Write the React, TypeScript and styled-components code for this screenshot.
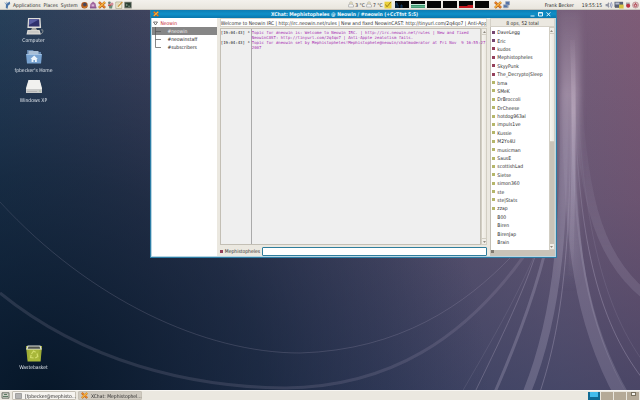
import React, { useState } from "react";
import styled, { createGlobalStyle } from "styled-components";

const GlobalStyle = createGlobalStyle`
  * { box-sizing: border-box; }
  html, body { margin: 0; padding: 0; }
  body { font-family: "DejaVu Sans Condensed", "Liberation Sans", sans-serif; font-size: 5px; line-height: 8px; color: #2b2b2b; }
  button, input { font: inherit; color: inherit; margin: 0; padding: 0; border: 0; background: none; }
  ul { list-style: none; margin: 0; padding: 0; }
  svg { display: block; flex: none; }
`;

const Screen = styled.div`
  position: relative;
  display: flex;
  flex-direction: column;
  height: 100vh;
  overflow: hidden;
  background: #17293f;
`;
const Wallpaper = styled.svg`
  position: absolute;
  inset: 0;
  width: 100%;
  height: 100%;
`;
const Panel = styled.header`
  position: relative;
  display: flex;
  align-items: center;
  height: 10px;
  padding: 0 1px 0 4px;
  background: linear-gradient(#f3f1ec, #e9e6de);
  border-bottom: 1px solid #c9c5bd;
`;
const MenuBar = styled.nav`
  display: flex;
  align-items: center;
  gap: 3px;
  margin: 0 3px 0 2px;
`;
const MenuButton = styled.button`
  line-height: 8px;
`;
const IconRow = styled.div`
  display: flex;
  align-items: center;
  gap: 1px;
`;
const Spacer = styled.div`
  flex: 1;
`;
const Weather = styled.span`
  display: flex;
  align-items: center;
  gap: 1px;
  margin-right: 1px;
`;
const Monitors = styled.div`
  display: flex;
  gap: 2px;
  margin: 0 5px 0 3px;
`;
const Identity = styled.span`
  margin: 0 8px 0 35px;
`;
const Clock = styled.time`
  margin-right: 3px;
`;

const Desktop = styled.main`
  position: relative;
  flex: 1;
  display: flex;
  min-height: 0;
`;
const Shortcuts = styled.div`
  display: flex;
  flex-direction: column;
  gap: 2px;
  width: 67px;
  padding: 7px 0 18px;
`;
const Shortcut = styled.button<{ $last?: boolean }>`
  display: flex;
  flex-direction: column;
  align-items: center;
  height: 28px;
  margin-top: ${(p) => (p.$last ? "auto" : "0")};
  color: #dfe5ec;
  white-space: nowrap;
`;

const Window = styled.section`
  position: absolute;
  left: 23.5%;
  top: 0;
  width: 63.5%;
  height: 65.3%;
  display: flex;
  flex-direction: column;
  border: 1px solid #2d7da5;
  border-top: 0;
  background: #ebe8e0;
  box-shadow: inset 0 0 0 1px #b9d6e3;
`;
const TitleBar = styled.div`
  display: flex;
  align-items: center;
  height: 8px;
  padding: 0 5px 0 2px;
  color: #e9f6fc;
  background: linear-gradient(#0d7db4, #0f8fc8 50%, #0877ad);
`;
const Title = styled.h1`
  flex: 1;
  margin: 0;
  text-align: center;
  font-size: 5px;
  line-height: 8px;
  font-weight: 700;
`;
const WindowControls = styled.div`
  display: flex;
  gap: 3px;
`;
const ControlButton = styled.button`
  width: 5px;
  height: 6px;
`;
const Body = styled.div`
  flex: 1;
  display: grid;
  grid-template-columns: minmax(0, 13fr) minmax(0, 54fr) minmax(0, 13fr);
  gap: 3px;
  min-height: 0;
  padding: 0 1px 1px;
`;
const Tree = styled.nav`
  padding-top: 1px;
  background: #fff;
`;
const ServerRow = styled.button`
  display: flex;
  align-items: center;
  gap: 2px;
  width: 100%;
  height: 8px;
  padding-left: 1px;
  color: #c4202c;
`;
const ChannelRow = styled.button<{ $active: boolean }>`
  display: flex;
  align-items: center;
  gap: 5px;
  width: 100%;
  height: 8px;
  padding-left: 3px;
  color: ${(p) => (p.$active ? "#f0f0f0" : "#202020")};
  background: ${(p) => (p.$active ? "#868686" : "transparent")};
`;
const Conversation = styled.div`
  display: flex;
  flex-direction: column;
  min-width: 0;
`;
const TopicInput = styled.input`
  width: 100%;
  height: 9px;
  line-height: 8px;
  background: #fff;
  border: 1px solid #d8d4ca;
  outline: 0;
`;
const LogFrame = styled.div`
  flex: 1;
  display: flex;
  min-height: 0;
  margin-top: 1px;
`;
const Log = styled.div`
  flex: 1;
  display: grid;
  grid-template-columns: 31px minmax(0, 1fr);
  min-width: 0;
  border: 1px solid #c3bfb5;
  background: #efefef;
  font-family: "DejaVu Sans Mono", "Liberation Mono", monospace;
  font-size: 4px;
  line-height: 5px;
  white-space: pre;
`;
const Times = styled.div`
  display: flex;
  flex-direction: column;
  gap: 5px;
  padding-top: 1px;
  border-right: 1px solid #aaa;
  color: #111;
`;
const TimeLine = styled.div`
  display: flex;
  justify-content: space-between;
  padding-right: 1px;
`;
const Messages = styled.div`
  position: relative;
  padding-top: 1px;
  color: #a62bb0;
`;
const ScrollTrack = styled.div`
  display: flex;
  flex-direction: column;
  width: 6px;
  background: #c9c3b8;
  border: 1px solid #d2cec3;
`;
const ScrollArrow = styled.button`
  display: grid;
  place-items: center;
  height: 5px;
  background: #f0eee8;
`;
const ScrollThumb = styled.div<{ $size: number }>`
  flex: ${(p) => p.$size};
  background: linear-gradient(90deg, #f6f4ef, #ebe8e0);
  border: solid #d2cec3;
  border-width: 1px 0;
`;
const ScrollGap = styled.div<{ $size: number }>`
  flex: ${(p) => p.$size};
`;
const Compose = styled.label`
  display: flex;
  align-items: center;
  gap: 2px;
  height: 11px;
  padding-top: 1px;
`;
const MessageInput = styled.input`
  flex: 1;
  min-width: 0;
  height: 9px;
  background: #fff;
  border: 1px solid #2f7d9c;
  border-radius: 1px;
  outline: 0;
`;
const Bullet = styled.span<{ $color: string }>`
  flex: none;
  width: 3px;
  height: 3px;
  background: ${(p) => p.$color};
`;
const Members = styled.aside`
  display: flex;
  flex-direction: column;
  min-width: 0;
`;
const MemberCount = styled.div`
  height: 9px;
  text-align: center;
  line-height: 8px;
  border: 1px solid #d5d1c7;
`;
const MemberFrame = styled.div`
  flex: 1;
  display: flex;
  min-height: 0;
`;
const MemberList = styled.ul`
  flex: 1;
  display: grid;
  grid-auto-rows: minmax(0, 1fr);
  min-width: 0;
  overflow: hidden;
  padding: 1px 0 4px 1px;
  background: #fff;
  border-left: 1px solid #c3bfb5;
`;
const Member = styled.li`
  display: flex;
  align-items: center;
  gap: 2px;
  white-space: nowrap;
`;
const HorizontalTrack = styled.div`
  height: 6px;
  padding-left: 1px;
  background: #c9c3b8;
`;

const TaskBar = styled.footer`
  position: relative;
  display: flex;
  align-items: center;
  gap: 2px;
  height: 10px;
  padding: 0 1px;
  background: #ebe8e0;
  border-top: 1px solid #f8f6f2;
`;
const TaskButton = styled.button<{ $active?: boolean }>`
  display: flex;
  align-items: center;
  gap: 3px;
  width: 64px;
  height: 9px;
  padding: 0 2px;
  white-space: nowrap;
  border: 1px solid #c6c1b6;
  border-radius: 1px;
  background: ${(p) => (p.$active ? "#d0cbc1" : "#f6f4f0")};
`;
const Pager = styled.div`
  display: flex;
  gap: 1px;
  margin-left: auto;
`;
const Workspace = styled.button<{ $active?: boolean }>`
  display: flex;
  justify-content: center;
  width: 12px;
  height: 8px;
  background: ${(p) => (p.$active ? "#116b94" : "#b5aa98")};
`;
const MiniWindow = styled.span<{ $active?: boolean }>`
  width: ${(p) => (p.$active ? 8 : 5)}px;
  height: ${(p) => (p.$active ? 5 : 4)}px;
  background: ${(p) => (p.$active ? "#43bdec" : "#f4f2ee")};
  border: ${(p) => (p.$active ? "0" : "1px solid #77705f")};
`;

const XChatIcon = ({ size = 8 }: { size?: number }) => (
  <svg width={size} height={size} viewBox="0 0 8 8">
    <path d="M1 1.2 7 6.8M7 1.2 1 6.8" stroke="#b65b12" strokeWidth="2.5" />
    <path d="M1 1 7 6.5" stroke="#e7842b" strokeWidth="1.6" />
    <path d="M7 1 1 6.5" stroke="#f4b642" strokeWidth="1.6" />
  </svg>
);
const FootIcon = () => (
  <svg width="7" height="8" viewBox="0 0 7 8">
    <path d="M2 3 5.8.4 6.2 3 4.2 4.6 3.6 7.8 1.8 7Z" fill="#4b75a8" />
    <path d="M.8 1.5 2 3.4M2.6.8 3.2 2.6" stroke="#7895bb" strokeWidth=".8" />
  </svg>
);
const FoxIcon = () => (
  <svg width="7" height="8" viewBox="0 0 7 8">
    <circle cx="3.5" cy="4.2" r="3.2" fill="#a9531c" />
    <circle cx="3.8" cy="3.4" r="1.7" fill="#424a62" />
    <path d="M.6 3C1 6 4 7 6.5 4.5 6 8 1 8 .6 3Z" fill="#cf812b" />
  </svg>
);
const PidginIcon = () => (
  <svg width="8" height="8" viewBox="0 0 8 8">
    <path d="M4 .6 6.5 2.4 7.5 7H.8L1.4 3Z" fill="#a0659f" />
    <path d="M2.6 3.4h2.6v2H2.6z" fill="#d8b5d8" />
    <path d="M1 7h6.4" stroke="#73447d" strokeWidth=".8" />
  </svg>
);
const FlowerIcon = () => (
  <svg width="7" height="8" viewBox="0 0 7 8">
    <path d="M1.4 4h4.4L5 7.6H2.4Z" fill="#6c8c78" />
    <circle cx="2.4" cy="1.8" r="1.4" fill="#6b7f75" />
    <circle cx="5" cy="3" r="1.5" fill="#d28b98" />
    <path d="M1 3.4h3v1.4H1z" fill="#c54b4b" />
  </svg>
);
const NoteIcon = () => (
  <svg width="8" height="8" viewBox="0 0 8 8">
    <path d="M.8 1h6v6.4h-6z" fill="#f2edd0" stroke="#9b9679" strokeWidth=".6" />
    <path d="M7.4.8 3 5.6" stroke="#c68b31" strokeWidth="1.1" />
    <path d="M2 3h2M2 5h1" stroke="#aaa78c" strokeWidth=".5" />
  </svg>
);
const TerminalIcon = () => (
  <svg width="8" height="8" viewBox="0 0 8 8">
    <path d="M.3.8h7.4v6.6H.3z" fill="#747970" />
    <path d="M1.2 1.7h5.6v4.6H1.2z" fill="#263c30" />
    <path d="M2 3 3.4 4 2 5M4 5.2h2" fill="none" stroke="#b5c9b8" strokeWidth=".6" />
  </svg>
);
const CloudIcon = () => (
  <svg width="6" height="7" viewBox="0 0 6 7">
    <circle cx="3" cy="2.2" r="1.5" fill="#eee4bc" stroke="#aaa" strokeWidth=".5" />
    <path d="M.6 3.6Q3 2 5.5 4v2H.6Z" fill="#f5f5f5" stroke="#9b9b9b" strokeWidth=".6" />
  </svg>
);
const TomboyIcon = () => (
  <svg width="8" height="8" viewBox="0 0 8 8">
    <path d="M.5.7h7v6.8h-7z" fill="#ead03a" />
    <path d="M1.5 3.5 3 5.8 7 .8" fill="none" stroke="#9d7c1c" strokeWidth="1" />
  </svg>
);
const NetworkIcon = () => (
  <svg width="7" height="8" viewBox="0 0 7 8">
    <path d="M2.6.6h4v3.4h-4zM.5 3.8h4v3h-4z" fill="#5272a7" stroke="#9da7b8" strokeWidth=".6" />
    <path d="M5 4.2v2.6" stroke="#667793" strokeWidth=".7" />
  </svg>
);
const VolumeIcon = () => (
  <svg width="8" height="8" viewBox="0 0 8 8">
    <path d="M.6 3h1.6L4 1v6L2.2 5.2H.6Z" fill="#9699a5" />
    <path d="M5 2q1.2 2 0 4M6.2 1q2 3 0 6" fill="none" stroke="#7681b3" strokeWidth=".7" />
  </svg>
);
const MailIcon = () => (
  <svg width="10" height="8" viewBox="0 0 10 8">
    <path d="M.5.8h8.6v5.4H.5z" fill="#596075" />
    <path d="M1.4 1.5h4v2h-4z" fill="#b7bed0" />
    <path d="M5 3.6h4.6v3.9H5z" fill="#d8c342" />
    <path d="M1 6.5h4" stroke="#555" strokeWidth=".7" />
  </svg>
);
const PlugIcon = () => (
  <svg width="6" height="8" viewBox="0 0 6 8">
    <path d="M1 1.5h3.8v4H1z" fill="#a6a6a6" />
    <circle cx="3.2" cy="4.8" r="2" fill="#bd3144" />
  </svg>
);
const PowerIcon = () => (
  <svg width="7" height="8" viewBox="0 0 7 8">
    <circle cx="3.5" cy="4" r="3" fill="#dec4c2" stroke="#b17c80" strokeWidth=".6" />
    <path d="M2.4 3Q1.4 5.8 3.5 5.8T4.6 3M3.5 1.8v2" fill="none" stroke="#a93344" strokeWidth=".8" />
  </svg>
);

const monitorKinds = ["cpu", "memory", "idle", "idle", "load", "idle"] as const;
const Monitor = ({ kind }: { kind: (typeof monitorKinds)[number] }) => (
  <svg width="14" height="7" viewBox="0 0 14 7">
    <rect width="14" height="7" fill="#050505" />
    {kind === "cpu" && <path d="M1 7V2h1v2h1v3M6 7V4h1v3" fill="none" stroke="#174777" strokeWidth=".8" />}
    {kind === "memory" && (
      <>
        <path d="M0 3h14v4H0z" fill="#3b946c" />
        <path d="M0 3.5h14" stroke="#c8eedb" />
        <path d="M0 5.7h14" stroke="#7fc9a5" strokeWidth=".7" />
      </>
    )}
    {kind === "load" && <path d="M0 5h8l1-1h5v3H0z" fill="#c0161d" />}
  </svg>
);

const ComputerIcon = () => (
  <svg width="20" height="19" viewBox="0 0 20 19">
    <path d="M4 1h12.5l.6 10H3.4Z" fill="#dddcd8" />
    <path d="M5.2 2.2h10l.4 7.4H4.8Z" fill="#30316d" />
    <path d="M5.2 2.2h10L5 8Z" fill="#5a5ea3" />
    <path d="M8 11h4l1 2H7Z" fill="#aaa9a4" />
    <path d="M3.5 13h12l1.5 4.5H2.5Z" fill="#e1dfda" />
    <path d="M4.3 14.2h10.4M4 15.8h11.4" stroke="#aaa" strokeWidth=".6" />
    <path d="M17 13q2-1 2 1t-2 3" fill="none" stroke="#999f9d" strokeWidth=".8" />
  </svg>
);
const HomeIcon = () => (
  <svg width="20" height="19" viewBox="0 0 20 19">
    <path d="M3 3h6l1.5 2H17v5H3Z" fill="#6486ad" />
    <path d="M4.5 4h10v5h-10z" fill="#a9bfd6" />
    <path d="M2 7h16l-1 9.5H3Z" fill="#78a3d1" />
    <path d="M2.5 7.5h15" stroke="#a5c3e2" />
    <path d="m6.5 12 3.7-3.4 3.6 3.4h-1v3h-1.8v-2H9.4v2H7.6v-3Z" fill="#edf5fc" />
  </svg>
);
const DriveIcon = () => (
  <svg width="20" height="19" viewBox="0 0 20 19">
    <path d="M4.5 3h11.2L18 11v5H2v-5Z" fill="#e4e4e2" />
    <path d="M4.8 3h10.7l2.2 9H2.5Z" fill="#f1f1ef" />
    <path d="M2 12h16v4H2z" fill="#c9cac9" />
    <path d="M3 14.5h10" stroke="#aaa" strokeWidth=".7" />
    <circle cx="16" cy="14" r=".6" fill="#7aa46e" />
  </svg>
);
const BinIcon = () => (
  <svg width="20" height="19" viewBox="0 0 20 19">
    <path d="M2 2h16l-1.4 15.5H3.6Z" fill="#a8b73a" />
    <path d="M3.6 1.5h12.8l1.5 4H2Z" fill="#dde0d8" />
    <path d="M4.5 2.6h11l.8 2.2H3.7Z" fill="#4f534b" />
    <path d="m7.5 10 2-3 2.2 1.2M13 9.5l.8 3-2.5 1.5M9.6 14l-3-.5.5-2.6" fill="none" stroke="#d3dd6c" strokeWidth="1.2" />
    <path d="M4 6v9M16 6v9" stroke="#8b9a2c" strokeWidth=".6" />
  </svg>
);

const strands = [
  { d: "M0 293C85 362 190 387 285 388C390 387 465 338 524 256", w: 3, o: 0.16 },
  { d: "M0 202C90 300 205 353 300 353C400 350 465 305 512 256", w: 1, o: 0.2 },
  { d: "M545 220C535 270 505 330 475 392", w: 1, o: 0.3 },
  { d: "M550 215C530 275 495 335 462 392", w: 1, o: 0.14 },
  { d: "M552 220C542 275 520 335 495 392", w: 3, o: 0.28 },
  { d: "M564 80C565 220 560 310 527 392", w: 8, o: 0.28 },
  { d: "M571 80C571 240 564 320 540 392", w: 1, o: 0.35 },
  { d: "M568 80C568 250 582 325 621 396", w: 12, o: 0.24 },
  { d: "M572 80C571 250 590 330 629 396", w: 2, o: 0.22 },
  { d: "M574 80C577 240 598 320 642 378", w: 1, o: 0.35 },
  { d: "M577 80C582 240 610 315 642 360", w: 1, o: 0.15 },
  { d: "M576 60C580 190 596 255 644 294", w: 9, o: 0.17 },
];

const Backdrop = () => (
  <Wallpaper viewBox="0 0 640 400" preserveAspectRatio="none" aria-hidden="true">
    <defs>
      <linearGradient id="base" x1="0" y1="0" x2="1" y2="0">
        <stop offset="0" stopColor="#2b4660" />
        <stop offset=".25" stopColor="#474963" />
        <stop offset=".6" stopColor="#5a526c" />
        <stop offset=".88" stopColor="#77607b" />
        <stop offset="1" stopColor="#7f5c77" />
      </linearGradient>
      <linearGradient id="shade" x1="0" y1="0" x2="0" y2="1">
        <stop offset="0" stopColor="#26365a" stopOpacity="0" />
        <stop offset=".5" stopColor="#26365a" stopOpacity=".22" />
        <stop offset="1" stopColor="#24365a" stopOpacity=".6" />
      </linearGradient>
      <radialGradient id="deep" gradientUnits="userSpaceOnUse" cx="40" cy="400" r="450">
        <stop offset="0" stopColor="#021222" stopOpacity=".9" />
        <stop offset=".5" stopColor="#06172b" stopOpacity=".54" />
        <stop offset="1" stopColor="#111d38" stopOpacity="0" />
      </radialGradient>
      <linearGradient id="beam" x1="0" y1="0" x2="0" y2="1">
        <stop offset="0" stopColor="#c9b8cb" stopOpacity=".05" />
        <stop offset=".3" stopColor="#c9b8cb" stopOpacity=".5" />
        <stop offset=".6" stopColor="#b9b0c7" stopOpacity=".3" />
        <stop offset="1" stopColor="#b9b0c7" stopOpacity="0" />
      </linearGradient>
      <linearGradient id="reveal" x1="0" y1="0" x2="0" y2="1">
        <stop offset=".2" stopColor="#000" />
        <stop offset=".62" stopColor="#fff" />
      </linearGradient>
      <filter id="soft" x="-50%" y="-10%" width="200%" height="120%">
        <feGaussianBlur stdDeviation="3" />
      </filter>
      <filter id="fine">
        <feGaussianBlur stdDeviation=".7" />
      </filter>
      <mask id="fade" maskUnits="userSpaceOnUse" x="0" y="0" width="640" height="400">
        <rect width="640" height="400" fill="url(#reveal)" />
      </mask>
    </defs>
    <rect width="640" height="400" fill="url(#base)" />
    <rect width="640" height="400" fill="url(#shade)" />
    <rect width="640" height="400" fill="url(#deep)" />
    <g mask="url(#fade)">
      <g fill="none" stroke="#b8b0c8" filter="url(#fine)">
        {strands.map((s) => (
          <path key={s.d} d={s.d} strokeWidth={s.w} opacity={s.o} />
        ))}
      </g>
    </g>
    <path d="M559 10Q562 150 556 290H578Q578 150 581 10Z" fill="url(#beam)" filter="url(#soft)" />
    <path d="M570 40Q574 150 568 280H573Q577 150 575 40Z" fill="url(#beam)" filter="url(#fine)" />
  </Wallpaper>
);

const ops = ["DaveLegg", "Eric", "kudos", "Mephistopheles", "SkyyPunk", "The_Decrypto|Sleep"];
const voiced = ["bma", "SMeK", "DrBroccoli", "DrCheese", "hotdog963al", "impuls1ve", "Kussie", "M2Ys4U", "musicman", "SausE", "scottishLad", "Sietse", "simon360", "ste", "ste|Stats", "zzap"];
const plain = ["B00", "Biren", "BirenJap", "Brain"];
const members = [
  ...ops.map((name, i) => ({ name, color: i < 2 ? "#74456f" : "#94405a" })),
  ...voiced.map((name) => ({ name, color: "#b5b66a" })),
  ...plain.map((name) => ({ name, color: "transparent" })),
];
const channels = ["#neowin", "#neowinstaff", "#subscribers"];

const Branch = ({ last }: { last: boolean }) => (
  <svg width="7" height="8" viewBox="0 0 7 8">
    <path d={last ? "M.5 0V4.5H6" : "M.5 0V8M.5 4.5H6"} fill="none" stroke="#555" strokeWidth=".7" />
  </svg>
);
const Arrow = ({ down }: { down?: boolean }) => (
  <svg width="3" height="2" viewBox="0 0 3 2">
    <path d={down ? "M0 0h3L1.5 2Z" : "M0 2h3L1.5 0Z"} fill="#918b80" />
  </svg>
);

export default function App() {
  const [channel, setChannel] = useState(channels[0]);
  const [message, setMessage] = useState("");
  const [topic, setTopic] = useState(
    "Welcome to Neowin IRC | http://irc.neowin.net/rules | New and fixed NeowinCAST: http://tinyurl.com/2q4qo7 | Anti-Apple zealotism fails."
  );
  return (
    <>
      <GlobalStyle />
      <Screen>
        <Backdrop />
        <Panel>
          <FootIcon />
          <MenuBar>
            <MenuButton>Applications</MenuButton>
            <MenuButton>Places</MenuButton>
            <MenuButton>System</MenuButton>
          </MenuBar>
          <IconRow>
            <FoxIcon />
            <PidginIcon />
            <XChatIcon />
            <FlowerIcon />
            <NoteIcon />
            <TerminalIcon />
          </IconRow>
          <Spacer />
          <Weather><CloudIcon />3 °C</Weather>
          <Weather><CloudIcon />7 °C</Weather>
          <TomboyIcon />
          <Monitors>
            {monitorKinds.map((kind, i) => <Monitor key={i} kind={kind} />)}
          </Monitors>
          <IconRow>
            <XChatIcon />
            <NetworkIcon />
          </IconRow>
          <Identity>Frank Becker</Identity>
          <Clock>19:55:15</Clock>
          <IconRow>
            <VolumeIcon />
            <MailIcon />
            <PlugIcon />
            <PowerIcon />
          </IconRow>
        </Panel>

        <Desktop>
          <Shortcuts>
            <Shortcut><ComputerIcon />Computer</Shortcut>
            <Shortcut><HomeIcon />fpbecker's Home</Shortcut>
            <Shortcut><DriveIcon />Windows XP</Shortcut>
            <Shortcut $last><BinIcon />Wastebasket</Shortcut>
          </Shortcuts>

          <Window>
            <TitleBar>
              <XChatIcon size={6} />
              <Title>XChat: Mephistopheles @ Neowin / #neowin (+CcTfnt 5:5)</Title>
              <WindowControls>
                <ControlButton aria-label="Minimise">
                  <svg width="5" height="6" viewBox="0 0 5 6"><path d="M.5 5h4" stroke="#e4f4fb" /></svg>
                </ControlButton>
                <ControlButton aria-label="Maximise">
                  <svg width="5" height="6" viewBox="0 0 5 6"><path d="M.5 1.5h4v3.5h-4zM.5 2h4" fill="none" stroke="#e4f4fb" /></svg>
                </ControlButton>
                <ControlButton aria-label="Close">
                  <svg width="5" height="6" viewBox="0 0 5 6"><path d="m.6 1.4 3.8 3.8m0-3.8L.6 5.2" stroke="#e4f4fb" /></svg>
                </ControlButton>
              </WindowControls>
            </TitleBar>
            <Body>
              <Tree>
                <ServerRow>
                  <svg width="5" height="5" viewBox="0 0 5 5"><path d="M.5 1h4L2.5 4Z" fill="#fff" stroke="#444" strokeWidth=".7" /></svg>
                  Neowin
                </ServerRow>
                {channels.map((name, i) => (
                  <ChannelRow key={name} $active={name === channel} onClick={() => setChannel(name)}>
                    <Branch last={i === channels.length - 1} />
                    {name}
                  </ChannelRow>
                ))}
              </Tree>
              <Conversation>
                <TopicInput aria-label="Topic" value={topic} onChange={(e) => setTopic(e.target.value)} />
                <LogFrame>
                  <Log>
                    <Times>
                      <TimeLine><span>[19:04:43]</span><span>*</span></TimeLine>
                      <TimeLine><span>[19:04:43]</span><span>*</span></TimeLine>
                    </Times>
                    <Messages>
                      <div>{"Topic for #neowin is: Welcome to Neowin IRC. | http://irc.neowin.net/rules | New and fixed\nNeowinCAST: http://tinyurl.com/2q4qo7 | Anti-Apple zealotism fails."}</div>
                      <div>{"Topic for #neowin set by Mephistopheles!Mephistophele@neowin/chatmoderator at Fri Nov  9 16:55:27\n2007"}</div>
                    </Messages>
                  </Log>
                  <ScrollTrack>
                    <ScrollArrow aria-label="Scroll log up"><Arrow /></ScrollArrow>
                    <ScrollThumb $size={1} />
                    <ScrollArrow aria-label="Scroll log down"><Arrow down /></ScrollArrow>
                  </ScrollTrack>
                </LogFrame>
                <Compose>
                  <Bullet $color="#94405a" />
                  Mephistopheles
                  <MessageInput value={message} onChange={(e) => setMessage(e.target.value)} />
                </Compose>
              </Conversation>
              <Members>
                <MemberCount>8 ops, 52 total</MemberCount>
                <MemberFrame>
                  <MemberList>
                    {members.map((m) => (
                      <Member key={m.name}><Bullet $color={m.color} />{m.name}</Member>
                    ))}
                  </MemberList>
                  <ScrollTrack>
                    <ScrollArrow aria-label="Scroll members up"><Arrow /></ScrollArrow>
                    <ScrollThumb $size={51} />
                    <ScrollGap $size={49} />
                    <ScrollArrow aria-label="Scroll members down"><Arrow down /></ScrollArrow>
                  </ScrollTrack>
                </MemberFrame>
                <HorizontalTrack><Bullet as="div" $color="#817a70" /></HorizontalTrack>
              </Members>
            </Body>
          </Window>
        </Desktop>

        <TaskBar>
          <svg width="9" height="7" viewBox="0 0 9 7">
            <path d="M1 .8h7v5.4H1z" fill="#cfd3c9" stroke="#656b61" strokeWidth=".9" />
            <path d="M2 4.5h5M3 2.5h3" stroke="#5b7a62" />
          </svg>
          <TaskButton>
            <svg width="7" height="6" viewBox="0 0 7 6"><path d="M.5.5h6v5h-6z" fill="#b4b4b4" stroke="#8b8b8b" strokeWidth=".7" /></svg>
            [fpbecker@mephisto...
          </TaskButton>
          <TaskButton $active>
            <XChatIcon size={7} />
            XChat: Mephistophel...
          </TaskButton>
          <Pager>
            <Workspace $active aria-label="Workspace 1"><MiniWindow $active /></Workspace>
            <Workspace aria-label="Workspace 2" />
            <Workspace aria-label="Workspace 3" />
            <Workspace aria-label="Workspace 4"><MiniWindow /></Workspace>
          </Pager>
        </TaskBar>
      </Screen>
    </>
  );
}
